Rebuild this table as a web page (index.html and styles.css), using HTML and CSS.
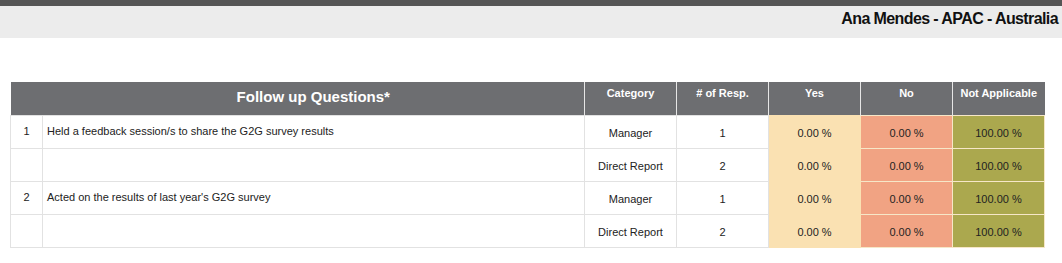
FILE: index.html
```html
<!DOCTYPE html>
<html>
<head>
<meta charset="utf-8">
<link rel="stylesheet" href="styles.css">
</head>
<body>
<div class="topbar"></div>
<div class="band"><span class="who">Ana Mendes - APAC - Australia</span></div>
<table class="grid">
  <colgroup>
    <col class="c-num"><col class="c-q"><col class="c-m"><col class="c-m"><col class="c-m"><col class="c-m"><col class="c-m">
  </colgroup>
  <thead>
    <tr>
      <th class="blank"></th>
      <th class="big">Follow up Questions*</th>
      <th>Category</th>
      <th># of Resp.</th>
      <th>Yes</th>
      <th>No</th>
      <th>Not Applicable</th>
    </tr>
  </thead>
  <tbody>
    <tr>
      <td class="num">1</td>
      <td class="q">Held a feedback session/s to share the G2G survey results</td>
      <td>Manager</td><td>1</td>
      <td class="yes">0.00 %</td><td class="no">0.00 %</td><td class="na">100.00 %</td>
    </tr>
    <tr>
      <td class="num"></td>
      <td class="q"></td>
      <td>Direct Report</td><td>2</td>
      <td class="yes">0.00 %</td><td class="no">0.00 %</td><td class="na">100.00 %</td>
    </tr>
    <tr>
      <td class="num">2</td>
      <td class="q">Acted on the results of last year's G2G survey</td>
      <td>Manager</td><td>1</td>
      <td class="yes">0.00 %</td><td class="no">0.00 %</td><td class="na">100.00 %</td>
    </tr>
    <tr>
      <td class="num"></td>
      <td class="q"></td>
      <td>Direct Report</td><td>2</td>
      <td class="yes">0.00 %</td><td class="no">0.00 %</td><td class="na">100.00 %</td>
    </tr>
  </tbody>
</table>
</body>
</html>
```
FILE: styles.css
```css
html, body { margin: 0; padding: 0; background: #fff; }
body { font-family: "Liberation Sans", Arial, sans-serif; color: #222; }
.topbar { height: 6px; background: #555555; }
.band {
  height: 32px;
  background: #ececec;
  display: flex;
  justify-content: flex-end;
  align-items: flex-start;
  padding-right: 4px;
  box-sizing: border-box;
}
.who {
  font-family: "Liberation Sans", Arial, sans-serif;
  font-weight: bold;
  font-size: 16px;
  letter-spacing: -0.6px;
  color: #111;
  margin-top: 4px;
}
.grid {
  margin: 44px 0 0 10px;
  width: 1034px;
  border-collapse: collapse;
  table-layout: fixed;
  font-size: 11px;
}
.c-num { width: 32px; }
.c-q { width: 542px; }
.c-m { width: 92px; }
.grid th {
  background: #6d6e71;
  color: #fff;
  font-weight: bold;
  font-size: 11px;
  height: 33px;
  padding: 5px 0 0;
  vertical-align: top;
  box-sizing: border-box;
  border-left: 1px solid #e6e6e6;
  text-align: center;
}
.grid th.blank { border-left: none; }
.grid th.big { border-left: none; font-size: 15px; padding-top: 6px; }
.grid td {
  height: 33px;
  padding: 2px 0 0;
  box-sizing: border-box;
  border: 1px solid #e2e2e2;
  text-align: center;
  vertical-align: middle;
  color: #222;
}
.grid td.num { padding: 0 0 2px; }
.grid td.q { text-align: left; padding: 0 4px 2px; }
.grid td.yes { background: #fae1b2; border-color: #fae1b2; }
.grid td.no { background: #f1a383; border-color: #f6e7c8; }
.grid td.na { background: #aba84e; border-color: #f6e7c8; }
```
